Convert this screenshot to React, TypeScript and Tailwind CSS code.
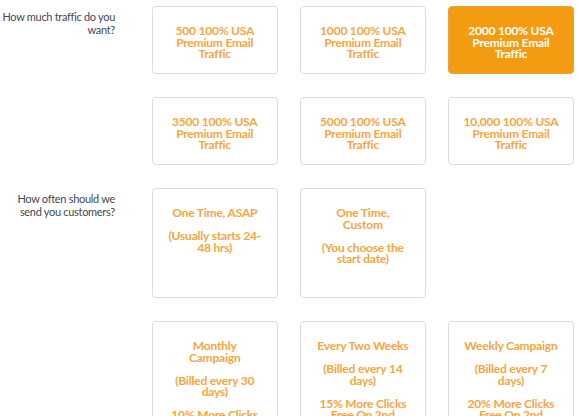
import React, { useState } from 'react';

interface Option {
  id: string;
  // paragraphs, each split into the lines it shows on the card
  paras: string[][];
}

const traffic = (amount: string, id: string): Option => ({
  id,
  paras: [[`${amount} 100% USA`, 'Premium Email', 'Traffic']],
});

const trafficOptions: Option[] = [
  traffic('500', '500'),
  traffic('1000', '1000'),
  traffic('2000', '2000'),
  traffic('3500', '3500'),
  traffic('5000', '5000'),
  traffic('10,000', '10000'),
];

const frequencyOptions: (Option | null)[] = [
  { id: 'asap', paras: [['One Time, ASAP'], ['(Usually starts 24-', '48 hrs)']] },
  { id: 'custom', paras: [['One Time,', 'Custom'], ['(You choose the', 'start date)']] },
  null,
  {
    id: 'monthly',
    paras: [['Monthly', 'Campaign'], ['(Billed every 30', 'days)'], ['10% More Clicks', 'Free On 2nd', 'Campaign']],
  },
  {
    id: 'biweekly',
    paras: [['Every Two Weeks'], ['(Billed every 14', 'days)'], ['15% More Clicks', 'Free On 2nd', 'Campaign']],
  },
  {
    id: 'weekly',
    paras: [['Weekly Campaign'], ['(Billed every 7', 'days)'], ['20% More Clicks', 'Free On 2nd', 'Campaign']],
  },
];

const OptionCard: React.FC<{
  option: Option;
  selected: boolean;
  tall?: boolean;
  onSelect: () => void;
}> = ({ option, selected, tall, onSelect }) => (
  <button
    onClick={onSelect}
    className={`w-full ${tall ? 'h-[110px]' : 'h-[68px]'} rounded-[4px] border px-[6px] pt-[18px] text-center font-bold text-[12px] leading-[11.5px] tracking-[-0.2px] whitespace-nowrap flex flex-col items-center justify-start ${
      selected
        ? 'bg-[#f39c12] border-[#eca13a] text-white'
        : 'bg-white border-[#dcdcdc] text-[#f7a540]'
    }`}
  >
    {option.paras.map((para, i) => (
      <span key={i} className={`block ${i > 0 ? 'mt-[11.5px]' : ''}`}>
        {para.map((line, j) => (
          <span key={j} className="block">
            {line}
          </span>
        ))}
      </span>
    ))}
  </button>
);

const Label: React.FC<{ children: React.ReactNode }> = ({ children }) => (
  <div className="w-[115px] shrink-0 pt-[5px] text-right text-[11px] leading-[12.5px] text-[#3f4852] tracking-[-0.3px]">
    {children}
  </div>
);

export default function App() {
  const [trafficChoice, setTrafficChoice] = useState('2000');
  const [frequency, setFrequency] = useState('');

  return (
    <div
      className="w-[580px] h-[416px] overflow-hidden bg-white pt-[6px]"
      style={{ fontFamily: 'Lato, "Open Sans", sans-serif' }}
    >
      <div className="flex gap-[37px]">
        <Label>How much traffic do you want?</Label>
        <div className="grid grid-cols-[125.5px_125.5px_125.5px] gap-x-[22.6px] gap-y-[23px]">
          {trafficOptions.map((o) => (
            <OptionCard
              key={o.id}
              option={o}
              selected={trafficChoice === o.id}
              onSelect={() => setTrafficChoice(o.id)}
            />
          ))}
        </div>
      </div>

      <div className="flex gap-[37px] mt-[23px]">
        <Label>How often should we send you customers?</Label>
        <div className="grid grid-cols-[125.5px_125.5px_125.5px] gap-x-[22.6px] gap-y-[23px]">
          {frequencyOptions.map((o, i) =>
            o ? (
              <OptionCard
                key={o.id}
                option={o}
                tall
                selected={frequency === o.id}
                onSelect={() => setFrequency(o.id)}
              />
            ) : (
              <div key={i} />
            )
          )}
        </div>
      </div>
    </div>
  );
}
